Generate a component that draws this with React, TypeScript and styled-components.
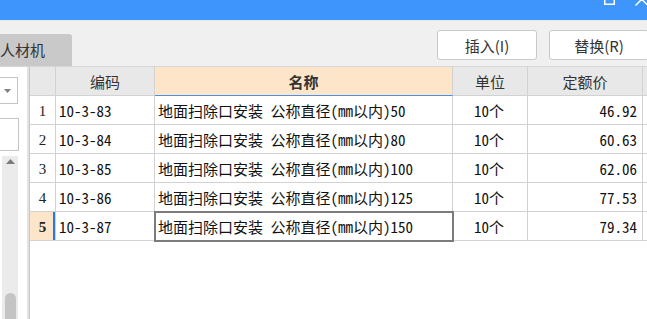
import React from 'react';
import styled, { createGlobalStyle, css } from 'styled-components';

const Global = createGlobalStyle`
  html, body { margin: 0; padding: 0; background: #f0f0f0; overflow: hidden; }
  body { width: 647px; height: 319px; font-family: "Noto Sans CJK SC", sans-serif; }
  * { box-sizing: border-box; }
`;

const Window = styled.div`
  width: 647px;
  height: 319px;
  display: flex;
  flex-direction: column;
  overflow: hidden;
  background: #f0f0f0;
`;

const TitleBar = styled.div`
  flex: none;
  height: 21px;
  background: #3e95fb;
  border-bottom: 1px solid #e4e6ea;
  display: flex;
  justify-content: flex-end;
  align-items: flex-start;
`;

const Toolbar = styled.div`
  flex: none;
  height: 46px;
  display: flex;
  align-items: flex-start;
  border-bottom: 1px solid #d6d6d6;
  overflow: hidden;
`;

const Tab = styled.div`
  flex: none;
  align-self: flex-end;
  width: 72px;
  height: 32px;
  background: #c9c9c9;
  border-top-right-radius: 3px;
  color: #333;
  font-size: 15px;
  line-height: 32px;
  padding-left: 0;
  white-space: nowrap;
`;

const ButtonGroup = styled.div`
  display: flex;
  gap: 12px;
  margin-left: auto;
  margin-right: -2px;
  margin-top: 9px;
`;

const Button = styled.button`
  flex: none;
  width: 100px;
  height: 30px;
  background: #fff;
  border: 1px solid #c9c9c9;
  border-radius: 3px;
  color: #333;
  font-family: "Noto Sans CJK SC", sans-serif;
  font-size: 15px;
  padding: 0;
`;

const Main = styled.div`
  flex: 1;
  display: flex;
  min-height: 0;
`;

const LeftPanel = styled.div`
  flex: none;
  width: 27px;
  background: #fff;
  display: flex;
  flex-direction: column;
  padding-top: 10px;
  overflow: hidden;
`;

const Dropdown = styled.div`
  width: 19px;
  height: 27px;
  margin-left: -1px;
  border: 1px solid #c4c4c4;
  border-left: none;
  display: flex;
  align-items: center;
  justify-content: center;
  padding-right: 2px;
`;

const TextBox = styled.div`
  width: 19px;
  height: 33px;
  margin-top: 14px;
  border: 1px solid #c4c4c4;
  border-left: none;
`;

const ScrollTrack = styled.div`
  margin: 5px 0 0 2px;
  width: 16px;
  flex: 1;
  background: #ebebeb;
  display: flex;
  flex-direction: column;
  align-items: center;
  justify-content: space-between;
  padding-top: 3px;
`;

const ScrollThumb = styled.div`
  width: 11px;
  height: 34px;
  margin-bottom: -8px;
  background: #c4c4c4;
  border-radius: 6px;
`;

const Splitter = styled.div`
  flex: none;
  width: 2px;
  background: #e2e2e2;
`;

const Grid = styled.div`
  flex: 1;
  background: #fff;
  border-left: 1px solid #c8c8c8;
  display: grid;
  grid-template-columns: 26px 99px 298px 75px 115px 40px;
  grid-auto-rows: 29px;
  align-content: start;
  overflow: hidden;
`;

const HeadCell = styled.div<{ $active?: boolean }>`
  background: #e8e8e8;
  border-right: 1px solid #d2d2d2;
  border-bottom: 1px solid #d2d2d2;
  color: #333;
  font-size: 15px;
  display: flex;
  align-items: center;
  justify-content: center;
  white-space: nowrap;
  ${(p) =>
    p.$active &&
    css`
      background: #fde5c9;
      font-weight: 700;
      border-bottom-color: #4a8fe3;
    `}
`;

const NumCell = styled.div<{ $selected?: boolean }>`
  background: #fff;
  border-right: 1px solid #d2d2d2;
  border-bottom: 1px solid #d2d2d2;
  font-family: "Liberation Serif", serif;
  font-size: 15px;
  color: #222;
  display: flex;
  align-items: center;
  justify-content: center;
  padding-top: 2px;
  ${(p) =>
    p.$selected &&
    css`
      background: #fde5c9;
      font-weight: 700;
      box-shadow: inset -2px 0 0 #2a78e4;
    `}
`;

const Cell = styled.div<{ $align?: 'left' | 'center' | 'right'; $current?: boolean }>`
  position: relative;
  background: #fff;
  border-right: 1px solid #d2d2d2;
  border-bottom: 1px solid #d2d2d2;
  font-family: "Noto Sans Mono CJK SC", "Noto Sans CJK SC", monospace;
  font-size: 15px;
  color: #111;
  display: flex;
  align-items: center;
  white-space: nowrap;
  overflow: hidden;
  padding: 0 5px 0 3px;
  justify-content: ${(p) =>
    p.$align === 'right' ? 'flex-end' : p.$align === 'center' ? 'center' : 'flex-start'};
  ${(p) =>
    p.$current &&
    css`
      overflow: visible;
      outline: 2px solid #7c7c7c;
      outline-offset: -1px;
      z-index: 1;
    `}
`;

const rows = [
  { code: '10-3-83', d: '50', price: '46.92' },
  { code: '10-3-84', d: '80', price: '60.63' },
  { code: '10-3-85', d: '100', price: '62.06' },
  { code: '10-3-86', d: '125', price: '77.53' },
  { code: '10-3-87', d: '150', price: '79.34' },
];

export default function App() {
  return (
    <>
      <Global />
      <Window>
        <TitleBar>
          <svg width="50" height="20" viewBox="0 0 50 20">
            <rect x="7.75" y="-6" width="9.5" height="10.25" fill="none" stroke="#fff" strokeWidth="1.5" />
            <path d="M38.5 -7 L51 5.5 M51 -7 L38.5 5.5" stroke="#fff" strokeWidth="1.5" fill="none" />
          </svg>
        </TitleBar>
        <Toolbar>
          <Tab>人材机</Tab>
          <ButtonGroup>
            <Button>插入(I)</Button>
            <Button>替换(R)</Button>
          </ButtonGroup>
        </Toolbar>
        <Main>
          <LeftPanel>
            <Dropdown>
              <svg width="7" height="4" viewBox="0 0 7 4">
                <path d="M0 0 L7 0 L3.5 4 Z" fill="#808080" />
              </svg>
            </Dropdown>
            <TextBox />
            <ScrollTrack>
              <svg width="9" height="5" viewBox="0 0 9 5">
                <path d="M0 5 L9 5 L4.5 0 Z" fill="#7a7a7a" />
              </svg>
              <ScrollThumb />
            </ScrollTrack>
          </LeftPanel>
          <Splitter />
          <Grid>
            <HeadCell />
            <HeadCell>编码</HeadCell>
            <HeadCell $active>名称</HeadCell>
            <HeadCell>单位</HeadCell>
            <HeadCell>定额价</HeadCell>
            <HeadCell />
            {rows.map((r, i) => {
              const sel = i === rows.length - 1;
              return (
                <React.Fragment key={r.code}>
                  <NumCell $selected={sel}>{i + 1}</NumCell>
                  <Cell>{r.code}</Cell>
                  <Cell $current={sel}>地面扫除口安装 公称直径(mm以内){r.d}</Cell>
                  <Cell $align="center">10个</Cell>
                  <Cell $align="right">{r.price}</Cell>
                  <Cell />
                </React.Fragment>
              );
            })}
          </Grid>
        </Main>
      </Window>
    </>
  );
}
